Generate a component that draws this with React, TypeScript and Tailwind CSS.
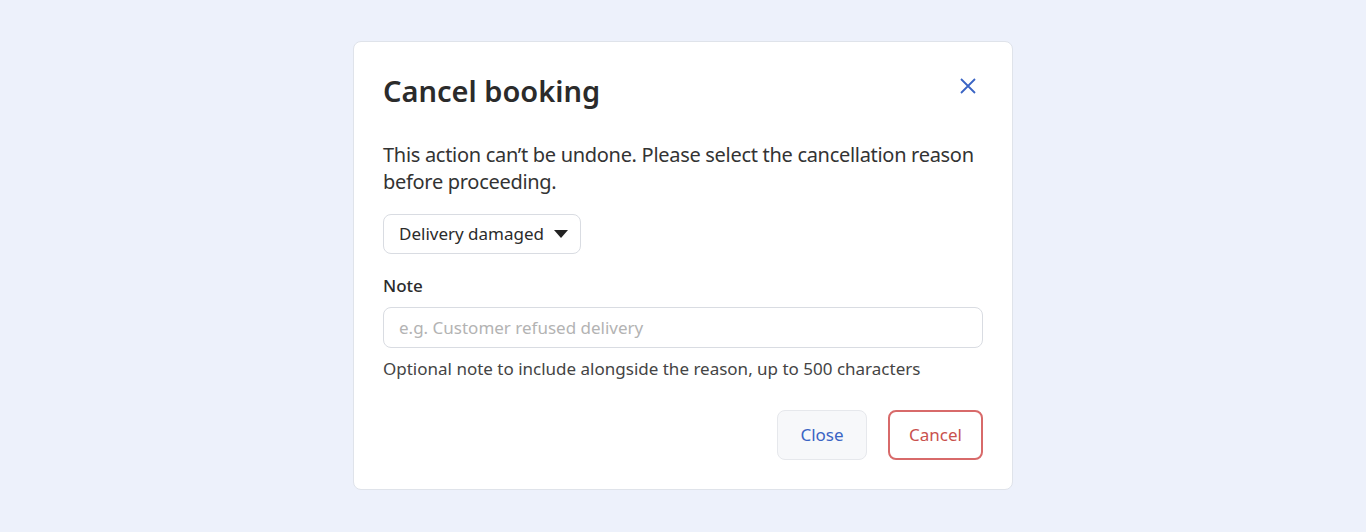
import { useState } from 'react';

const reasons = ['Delivery damaged', 'Customer unavailable', 'Wrong address', 'Other'];

export default function App() {
  const [reason, setReason] = useState(reasons[0]);
  const [note, setNote] = useState('');

  return (
    <div
      className="min-h-screen bg-[#edf1fb] flex justify-center pt-[41px]"
      style={{ fontFamily: '"Noto Sans", Inter, sans-serif' }}
    >
      <div className="w-[660px] h-[449px] bg-white border border-[#dfe3ea] rounded-lg px-[29px] pt-[27px] pb-[29px] flex flex-col">
        <div className="flex items-start justify-between">
          <h2 className="text-[29px] leading-[44px] font-semibold text-[#2b2b2b]">Cancel booking</h2>
          <button className="mt-[8px] mr-[6px] text-[#3a64c4]" aria-label="Close">
            <svg width="18" height="18" viewBox="0 0 18 18" fill="none" stroke="currentColor" strokeWidth="1.8">
              <path d="M2 2l14 14M16 2L2 16" />
            </svg>
          </button>
        </div>

        <p className="mt-[28px] text-[20px] tracking-[-0.3px] leading-[27px] text-[#333]">
          This action can’t be undone. Please select the cancellation reason before proceeding.
        </p>

        <div className="mt-[19px] relative self-start">
          <select
            value={reason}
            onChange={e => setReason(e.target.value)}
            className="appearance-none h-[40px] w-[198px] pl-[15px] pr-[30px] text-[17px] text-[#2b2b2b] border border-[#d9dce2] rounded-lg bg-white"
          >
            {reasons.map(r => (
              <option key={r}>{r}</option>
            ))}
          </select>
          <svg className="absolute right-[13px] top-[16px] pointer-events-none" width="14" height="8" viewBox="0 0 14 8">
            <path d="M0 0h14L7 8z" fill="#222" />
          </svg>
        </div>

        <label className="mt-[20px] text-[17px] leading-[24px] font-medium text-[#2b2b2b]">Note</label>
        <input
          value={note}
          onChange={e => setNote(e.target.value)}
          placeholder="e.g. Customer refused delivery"
          className="mt-[9px] h-[41px] w-full px-[15px] text-[17px] border border-[#d9dce2] rounded-lg placeholder:text-[#b3b3b3] outline-none"
        />
        <p className="mt-[9px] text-[17px] leading-[24px] text-[#444]">
          Optional note to include alongside the reason, up to 500 characters
        </p>

        <div className="mt-auto flex justify-end gap-[21px]">
          <button className="h-[50px] w-[90px] rounded-lg border border-[#e6e8ec] bg-[#f7f8fa] text-[17px] text-[#3a64c4]">
            Close
          </button>
          <button className="h-[50px] w-[95px] rounded-lg border-2 border-[#d86a6a] bg-white text-[17px] text-[#c9514d]">
            Cancel
          </button>
        </div>
      </div>
    </div>
  );
}
